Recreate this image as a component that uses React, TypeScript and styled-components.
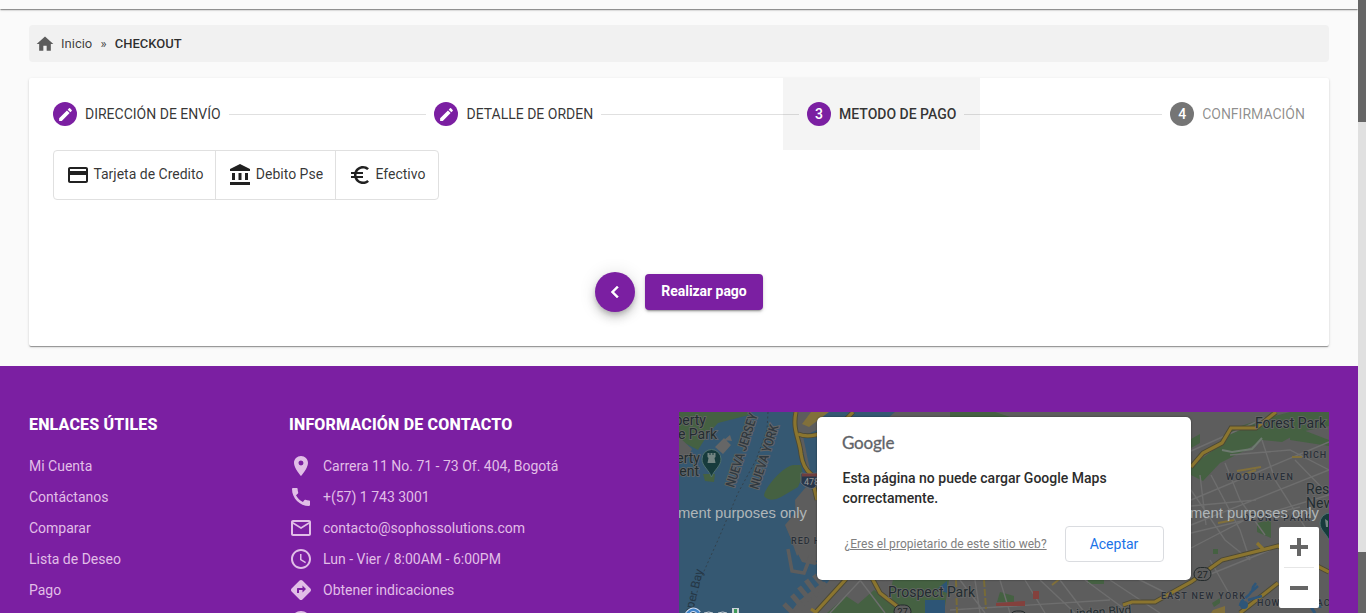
import React from "react";
import styled, { createGlobalStyle, css } from "styled-components";
import {
  MdHome,
  MdCreate,
  MdCreditCard,
  MdAccountBalance,
  MdEuroSymbol,
  MdChevronLeft,
  MdLocationOn,
  MdCall,
  MdMailOutline,
  MdSchedule,
  MdDirections,
  MdAccountCircle,
} from "react-icons/md";

const purple = "#7b1fa2";

const Global = createGlobalStyle`
  *, *::before, *::after { box-sizing: border-box; }
  html, body { margin: 0; height: 100%; overflow: hidden; }
  body { font-family: Roboto, "Liberation Sans", sans-serif; font-size: 14px; color: rgba(0,0,0,.87); background: #fafafa; }
  button { font-family: inherit; cursor: pointer; }
  a { color: inherit; text-decoration: none; }
`;

const Window = styled.div`
  display: flex;
  height: 613px;
  overflow: hidden;
`;

const Page = styled.div`
  flex: 1;
  min-width: 0;
  display: flex;
  flex-direction: column;
  background: #fafafa;
`;

const Scrollbar = styled.div`
  width: 8px;
  display: flex;
  flex-direction: column;
  background: #e0e0e0;
  justify-content: space-between;
`;

const Thumb = styled.div<{ $height: number }>`
  height: ${(p) => p.$height}px;
  background: #666;
`;

const Header = styled.header`
  height: 9px;
  flex: none;
  background: #fafafa;
  box-shadow: 0 2px 1px -1px rgba(0, 0, 0, 0.24), 0 1px 1px 0 rgba(0, 0, 0, 0.16),
    0 1px 3px 0 rgba(0, 0, 0, 0.14);
`;

const Main = styled.main`
  height: 357px;
  flex: none;
  padding: 16px 29px 0;
`;

const Breadcrumb = styled.nav`
  height: 37px;
  display: flex;
  align-items: center;
  padding: 0 6px;
  border-radius: 4px;
  background: #f1f1f1;
  font-size: 13px;
  color: rgba(0, 0, 0, 0.76);

  svg {
    width: 20px;
    height: 20px;
    margin-right: 6px;
    color: #5c5c5c;
  }
`;

const Separator = styled.span`
  margin: 0 8.2px;
`;

const Current = styled.span`
  font-weight: 500;
  color: rgba(0, 0, 0, 0.82);
`;

const Card = styled.section`
  height: 268px;
  margin-top: 16px;
  border-radius: 2px;
  background: #fff;
  box-shadow: 0 2px 1px -1px rgba(0, 0, 0, 0.24), 0 1px 1px 0 rgba(0, 0, 0, 0.16),
    0 1px 3px 0 rgba(0, 0, 0, 0.14);
`;

const Stepper = styled.div`
  display: flex;
  align-items: center;
  height: 72px;
`;

const Step = styled.div<{ $state: "done" | "active" | "pending" }>`
  display: flex;
  align-items: center;
  height: 72px;
  padding: 0 24px;
  color: ${(p) => (p.$state === "pending" ? "rgba(0,0,0,.46)" : "rgba(0,0,0,.8)")};
  ${(p) =>
    p.$state === "active" &&
    css`
      background: #f4f4f4;
      font-weight: 500;
    `}
`;

const StepIcon = styled.span<{ $muted?: boolean }>`
  width: 24px;
  height: 24px;
  margin-right: 8px;
  display: flex;
  align-items: center;
  justify-content: center;
  border-radius: 50%;
  background: ${(p) => (p.$muted ? "#757575" : purple)};
  color: #fff;
  font-weight: 500;

  svg {
    width: 17px;
    height: 17px;
  }
`;

const StepLabel = styled.span`
  white-space: nowrap;
`;

const StepLine = styled.i`
  flex: 1;
  height: 1px;
  margin: 1px -16px 0;
  z-index: 1;
  background: rgba(0, 0, 0, 0.12);
`;

const Toggles = styled.div`
  display: inline-flex;
  height: 50px;
  margin-left: 24px;
  border: 1px solid #e0e0e0;
  border-radius: 4px;
`;

const Toggle = styled.button`
  display: flex;
  align-items: center;
  padding: 0 12px;
  border: 0;
  background: none;
  font-size: 14px;
  color: rgba(0, 0, 0, 0.8);

  & + & {
    border-left: 1px solid #e0e0e0;
  }

  &:last-child {
    padding-right: 12.6px;
  }

  svg {
    width: 24px;
    height: 24px;
    margin-right: 3.4px;
    color: rgba(0, 0, 0, 0.87);
  }

  span {
    padding-bottom: 2px;
  }
`;

const Actions = styled.div`
  display: flex;
  justify-content: center;
  align-items: center;
  gap: 10px;
  margin-top: 72px;
`;

const BackButton = styled.button`
  width: 40px;
  height: 40px;
  padding: 0;
  display: flex;
  align-items: center;
  justify-content: center;
  border: 0;
  border-radius: 50%;
  background: ${purple};
  color: #fff;
  box-shadow: 0 3px 5px -1px rgba(0, 0, 0, 0.2), 0 6px 10px 0 rgba(0, 0, 0, 0.14),
    0 1px 18px 0 rgba(0, 0, 0, 0.12);

  svg {
    width: 24px;
    height: 24px;
  }

  path:last-child {
    stroke: currentColor;
    stroke-width: 0.5px;
  }
`;

const PayButton = styled.button`
  width: 118px;
  height: 36px;
  padding: 0 0 2px;
  border: 0;
  border-radius: 4px;
  background: ${purple};
  color: #fff;
  font-size: 14px;
  font-weight: 700;
  letter-spacing: -0.05px;
  box-shadow: 0 3px 1px -2px rgba(0, 0, 0, 0.2), 0 2px 2px 0 rgba(0, 0, 0, 0.14),
    0 1px 5px 0 rgba(0, 0, 0, 0.12);
`;

const Footer = styled.footer`
  flex: 1;
  min-height: 0;
  display: grid;
  grid-template-columns: 260px 390px 650px;
  padding: 46px 29px 0;
  background: ${purple};
  color: #fff;
`;

const FooterTitle = styled.h2`
  margin: 0 0 16px;
  height: 22px;
  line-height: 25px;
  font-size: 16px;
  font-weight: 800;
  letter-spacing: 0.18px;
`;

const FooterItem = styled.a`
  display: flex;
  align-items: center;
  height: 31px;
  color: #e1bee7;

  svg {
    width: 24px;
    height: 24px;
    margin-right: 10px;
  }
`;

const MapArea = styled.div`
  position: relative;
  height: 201px;
  overflow: hidden;

  > svg {
    display: block;
  }
`;

const MapDialog = styled.div`
  position: absolute;
  left: 138px;
  top: 5px;
  width: 374px;
  height: 163px;
  padding: 15px 25px 0;
  border-radius: 5px;
  background: #fff;
  box-shadow: 0 0 2px rgba(0, 0, 0, 0.5);
`;

const DialogLogo = styled.div`
  height: 22px;
  line-height: 22px;
  font-family: Lato, sans-serif;
  font-size: 17px;
  letter-spacing: -0.2px;
  color: #5f6368;
  -webkit-text-stroke: 0.3px #5f6368;
`;

const DialogText = styled.p`
  margin: 14px 0 18px;
  padding-left: 0.5px;
  line-height: 20px;
  font-weight: 500;
  color: #2c2c2c;
`;

const DialogRow = styled.div`
  display: flex;
  align-items: center;
  justify-content: space-between;
  padding: 0 2.5px;
`;

const OwnerLink = styled.a`
  font-size: 12px;
  letter-spacing: 0.04px;
  color: #808080;
  text-decoration: underline;
`;

const AcceptButton = styled.button`
  width: 99px;
  height: 36px;
  border: 1px solid #dadce0;
  border-radius: 4px;
  background: #fff;
  color: #1a73e8;
  font-size: 14px;
`;

const ZoomControl = styled.div`
  position: absolute;
  left: 600px;
  top: 115px;
  width: 40px;
  height: 81px;
  border-radius: 2px;
  background: #fff;
`;

const links = ["Mi Cuenta", "Contáctanos", "Comparar", "Lista de Deseo", "Pago"];

const contacts = [
  { icon: <MdLocationOn />, text: "Carrera 11 No. 71 - 73 Of. 404, Bogotá" },
  { icon: <MdCall />, text: "+(57) 1 743 3001" },
  { icon: <MdMailOutline />, text: "contacto@sophossolutions.com" },
  { icon: <MdSchedule />, text: "Lun - Vier / 8:00AM - 6:00PM" },
  { icon: <MdDirections />, text: "Obtener indicaciones" },
  { icon: <MdAccountCircle />, text: "" },
];

const MapDrawing = () => (
  <svg width="650" height="201" viewBox="679 412 650 201" fontFamily="Roboto, sans-serif">
    <rect x="679" y="412" width="650" height="201" fill="#5d5d5d" />
    {/* water */}
    <path d="M679 412H793L800 440L806 460L816 490L804 500L796 512L785 525L788 532L797 552L802 562L815 565L823 560L830 577L815 588L800 600L790 613H679Z" fill="#355872" />
    <path d="M793 412H817V480L808 470Z" fill="#5d5d5d" />
    <path d="M803 436L817 430V480L810 470Z" fill="#355872" />
    <path d="M817 412H895L880 425H850L830 420L817 440Z" fill="#355872" />
    <path d="M795 500L806 487L816 492V560L803 548L797 556L787 528L796 518Z" fill="#5d5d5d" />
    <path d="M788 549L792 571L804 573L811 555" fill="none" stroke="#5d5d5d" strokeWidth="3.5" />
    <path d="M806 580l12 16M799 587l11 13M792 595l12 14M814 575l10 12M784 604l9 9" stroke="#5d5d5d" strokeWidth="5" />
    <path d="M817 560l14 12M817 574l11 8" stroke="#355872" strokeWidth="4" />
    {/* parks */}
    <path d="M679 412H751L749 415L718 423L708 434L698 450L679 440Z" fill="#456142" />
    <path d="M679 437L692 449L688 458H679Z" fill="#5d5d5d" />
    <path d="M764 496C764 488 784 465 794 465L801 465L803 475L798 487L781 497Q770 503 764 496Z" fill="#456142" />
    <path d="M703 474l12 0l-1 8l-9 -1z" fill="#456142" />
    <path d="M827 613L846 596L858 604L874 590L888 600L893 580H949L944 613Z" fill="#456142" />
    <path d="M925 600h20v13h-20zM947 581l-10 8l10 4z" fill="#2d5576" />
    <path d="M870 578L887 582L893 602L880 596Z" fill="#5d5d5d" />
    <path d="M1191 466L1215 449L1228 430L1260 420L1290 412H1329V426L1300 432L1282 442L1262 440L1246 450L1220 463L1203 481L1191 475Z" fill="#456142" />
    <path d="M1290 425L1329 440V446L1290 440ZM1257 523l14-3v18l-14-6zM1191 439l9-5v9l-9 5zM1213 549h5v5h-5zM1212 603l8-5v5l-6 4z" fill="#456142" />
    <path d="M1088 578h16v6h-16zM1000 592l14 4v6h-17z" fill="#456142" />
    <path d="M950 412h45l15 5h-60z" fill="#456142" />
    {/* minor streets */}
    <g stroke="#6e6e6e" strokeWidth="1.4" fill="none">
      <path d="M1191 451L1265 418M1191 500L1329 442M1191 525L1329 470M1191 548L1245 520L1329 495M1191 490L1225 540L1250 560M1211 475L1240 530L1250 560M1262 440L1275 480L1310 535M1230 455L1290 450L1329 470M1191 506L1256 500M1200 475L1206 525M1225 463L1240 500L1265 535M1210 560L1230 595M1191 582L1270 550M1295 460L1329 495M1191 533L1300 507" />
      <path d="M830 613L870 570M860 580L885 613M1000 580L1010 613M960 580L985 613M975 580L980 613M1025 580L1045 613M1040 580L1075 613M950 610L1110 600M1085 580L1130 613M1110 580L1160 613M1060 580L1085 613M1130 575L1180 600" />
    </g>
    <path d="M1222 450L1232 452L1252 449L1262 438" stroke="#6e7a70" strokeWidth="2" fill="none" />
    {/* highways */}
    <g fill="none" stroke="#4c4935" strokeWidth="5">
      <path d="M796 412C792 430 800 440 801 454Q803 468 811 474L817 500" />
      <path d="M798 434C812 440 838 430 853 412" />
      <path d="M1191 467L1203 453L1222 443L1231 428H1256L1276 412" />
      <path d="M1123 605L1132 602L1155 602L1191 582L1222 560L1250 553L1278 546L1329 572M1240 613L1278 583" />
      <path d="M815 613L846 579M872 578L880 593L902 610" />
    </g>
    <g fill="none" stroke="#8b752f" strokeWidth="3.2">
      <path d="M796 412C792 430 800 440 801 454Q803 468 811 474L817 500" />
      <path d="M798 434C812 440 838 430 853 412" />
      <path d="M1191 467L1203 453L1222 443L1231 428H1256L1276 412" />
      <path d="M1123 605L1132 602L1155 602L1191 582L1222 560L1250 553L1278 546L1329 572M1240 613L1278 583" />
      <path d="M815 613L846 579M872 578L880 593L902 610M1257 543L1264 550M811 609L817 613" />
    </g>
    <path d="M956 580L957 613M984 580L986 609" stroke="#786b38" strokeWidth="2" strokeDasharray="7 2" />
    <path d="M802 424L811 412H829L817 421L809 427Z" fill="#81703b" />
    <path d="M1213 610L1225 606V613H1211Z" fill="#81703b" />
    <path d="M1237 471l24-4M1242 475l14-5M1218 523l16-3M1292 457l10 0M1052 585l10-8" stroke="#81703b" strokeWidth="2" />
    <path d="M996 603L1025 601V606H996ZM1033 591h6v8h-6z" fill="#83413d" />
    <path d="M1240 606C1240 597 1252 598 1253 587L1256 583M1248 600L1262 596M1250 593L1258 586" stroke="#2e5679" strokeWidth="2.4" fill="none" />
    <circle cx="1244" cy="605" r="4" fill="#2e5679" />
    <path d="M1311 607l4 6M1320 600v8" stroke="#2e5679" strokeWidth="3" />
    {/* state boundary */}
    <path d="M768 412L767 430L756 460L738 493L718 540L700 580L692 613" fill="none" stroke="#33424d" strokeWidth="1" strokeDasharray="2 2.5" />
    <path d="M715 447l9-9l7 7l-8 9zM724 440l6-5l2 6z" fill="#666" />
    {/* labels */}
    <g fill="#222c30" stroke="#686868" strokeWidth="1.6" paintOrder="stroke" fontSize="14">
      <text x="706" y="425" textAnchor="end">perty</text>
      <text x="717" y="439" textAnchor="end">e Park</text>
      <text x="700" y="462.500" textAnchor="end">erty</text>
      <text x="699" y="476" textAnchor="end">ent</text>
      <text x="888" y="597" textLength="87">Prospect Park</text>
      <text x="1255" y="428" textLength="71">Forest Park</text>
      <text x="1306" y="494">Res</text>
      <text x="1306" y="508">New</text>
      <text x="1070" y="618" fontSize="12" transform="rotate(-4 1070 618)">Linden Blvd</text>
    </g>
    <g fill="#292f38" stroke="#686868" strokeWidth="1" paintOrder="stroke" fontWeight="500" fontSize="9">
      <text x="1226" y="480" textLength="67">WOODHAVEN</text>
      <text x="1303" y="458" letterSpacing="0.9">RICH</text>
      <text x="1243" y="521" textLength="67">OZONE PARK</text>
      <text x="1161" y="599" textLength="84">EAST NEW YORK</text>
      <text x="1257" y="606" textLength="80">HOWARD BEACH</text>
      <text x="791" y="544" letterSpacing="1">RED HOOK</text>
    </g>
    <g fill="#303940" stroke="#666" strokeWidth="2" paintOrder="stroke" fontSize="13" fontWeight="500">
      <text transform="translate(734 488) rotate(-72)" textLength="77" lengthAdjust="spacingAndGlyphs">NUEVA JERSEY</text>
      <text transform="translate(758 490) rotate(-72)" textLength="67" lengthAdjust="spacingAndGlyphs">NUEVA YORK</text>
    </g>
    <text transform="translate(690 623) rotate(-76)" fill="#253746" fontSize="12">Upper Bay</text>
    {/* place pins */}
    <path d="M711.500 477C709 470 702 466 702 459A9.500 9.500 0 0 1 721 459C721 466 714 470 711.500 477Z" fill="#173b3c" stroke="#50716f" />
    <path d="M707.500 453h2v2h1v-2h2v2h1v-2h2v4l-1 1l1 5h-8l1-5l-1-1z" fill="#738582" />
    <path d="M1329 540C1326 533 1320 530 1320 523A10 10 0 0 1 1340 523Z" fill="#173b3c" stroke="#50716f" />
    <path d="M1325 519l3 2v6h-2z" fill="#738582" />
    {/* route shields */}
    <path d="M801 473Q809 475 817 473V484Q815 490 809 488Q803 486 801 483Z" fill="#27364a" stroke="#777" strokeWidth=".7" />
    <path d="M802 473.500H817V476.500H802Z" fill="#703e3e" />
    <text x="804" y="484.500" fill="#999" fontSize="9">478</text>
    <g fill="#5d5d5d" stroke="#242b2c" strokeWidth="1">
      <rect x="1194" y="567.500" width="17" height="13" rx="6.500" />
      <rect x="894" y="605" width="17" height="13" rx="6.500" />
      <rect x="1010" y="611" width="17" height="13" rx="6.500" />
    </g>
    <g fill="#1e2526" fontSize="9.500">
      <text x="1197.200" y="577.500">27</text>
      <text x="897.200" y="614.500">27</text>
    </g>
    {/* watermarks */}
    <g fill="#b0b6b9" fontFamily="Liberation Sans, sans-serif" fontSize="15">
      <text x="678" y="518" textLength="129" lengthAdjust="spacingAndGlyphs">ment purposes only</text>
      <text x="1190" y="518" textLength="129" lengthAdjust="spacingAndGlyphs">ment purposes only</text>
    </g>
    <path d="M687 614Q693 606 699 613" fill="none" stroke="#d5e0f2" strokeWidth="4.500" />
    <path d="M687 614Q693 606 699 613" fill="none" stroke="#4285c9" strokeWidth="2.600" />
    <path d="M704 613q5-2 9 0M718 613q5-2 9 0" stroke="#ccd3d8" strokeWidth="1" fill="none" />
    <path d="M732 608h7v5h-7z" fill="#ccd3d8" />
    <path d="M734 609h3v4h-3z" fill="#3f9a57" />
  </svg>
);

export default function App() {
  return (
    <>
      <Global />
      <Window>
        <Page>
          <Header />
          <Main>
            <Breadcrumb>
              <MdHome />
              <a href="#">Inicio</a>
              <Separator>»</Separator>
              <Current>CHECKOUT</Current>
            </Breadcrumb>
            <Card>
              <Stepper>
                <Step $state="done">
                  <StepIcon><MdCreate /></StepIcon>
                  <StepLabel>DIRECCIÓN DE ENVÍO</StepLabel>
                </Step>
                <StepLine />
                <Step $state="done">
                  <StepIcon><MdCreate /></StepIcon>
                  <StepLabel>DETALLE DE ORDEN</StepLabel>
                </Step>
                <StepLine />
                <Step $state="active">
                  <StepIcon>3</StepIcon>
                  <StepLabel>METODO DE PAGO</StepLabel>
                </Step>
                <StepLine />
                <Step $state="pending">
                  <StepIcon $muted>4</StepIcon>
                  <StepLabel>CONFIRMACIÓN</StepLabel>
                </Step>
              </Stepper>
              <Toggles>
                <Toggle><MdCreditCard /><span>Tarjeta de Credito</span></Toggle>
                <Toggle><MdAccountBalance /><span>Debito Pse</span></Toggle>
                <Toggle><MdEuroSymbol /><span>Efectivo</span></Toggle>
              </Toggles>
              <Actions>
                <BackButton aria-label="Volver"><MdChevronLeft /></BackButton>
                <PayButton>Realizar pago</PayButton>
              </Actions>
            </Card>
          </Main>
          <Footer>
            <div>
              <FooterTitle>ENLACES ÚTILES</FooterTitle>
              {links.map((l) => (
                <FooterItem key={l} href="#">{l}</FooterItem>
              ))}
            </div>
            <div>
              <FooterTitle>INFORMACIÓN DE CONTACTO</FooterTitle>
              {contacts.map((c, i) => (
                <FooterItem key={i} as="div">{c.icon}{c.text}</FooterItem>
              ))}
            </div>
            <MapArea>
              <MapDrawing />
              <MapDialog>
                <DialogLogo>Google</DialogLogo>
                <DialogText>Esta página no puede cargar Google Maps correctamente.</DialogText>
                <DialogRow>
                  <OwnerLink href="#">¿Eres el propietario de este sitio web?</OwnerLink>
                  <AcceptButton>Aceptar</AcceptButton>
                </DialogRow>
              </MapDialog>
              <ZoomControl>
                <svg width="40" height="81" viewBox="0 0 40 81">
                  <path d="M11 20h18M20 11v18M11 61h18" stroke="#666" strokeWidth="4" />
                  <path d="M5 40.500h30" stroke="#e6e6e6" />
                </svg>
              </ZoomControl>
            </MapArea>
          </Footer>
        </Page>
        <Scrollbar>
          <Thumb $height={122} />
          <Thumb $height={61} />
        </Scrollbar>
      </Window>
    </>
  );
}
